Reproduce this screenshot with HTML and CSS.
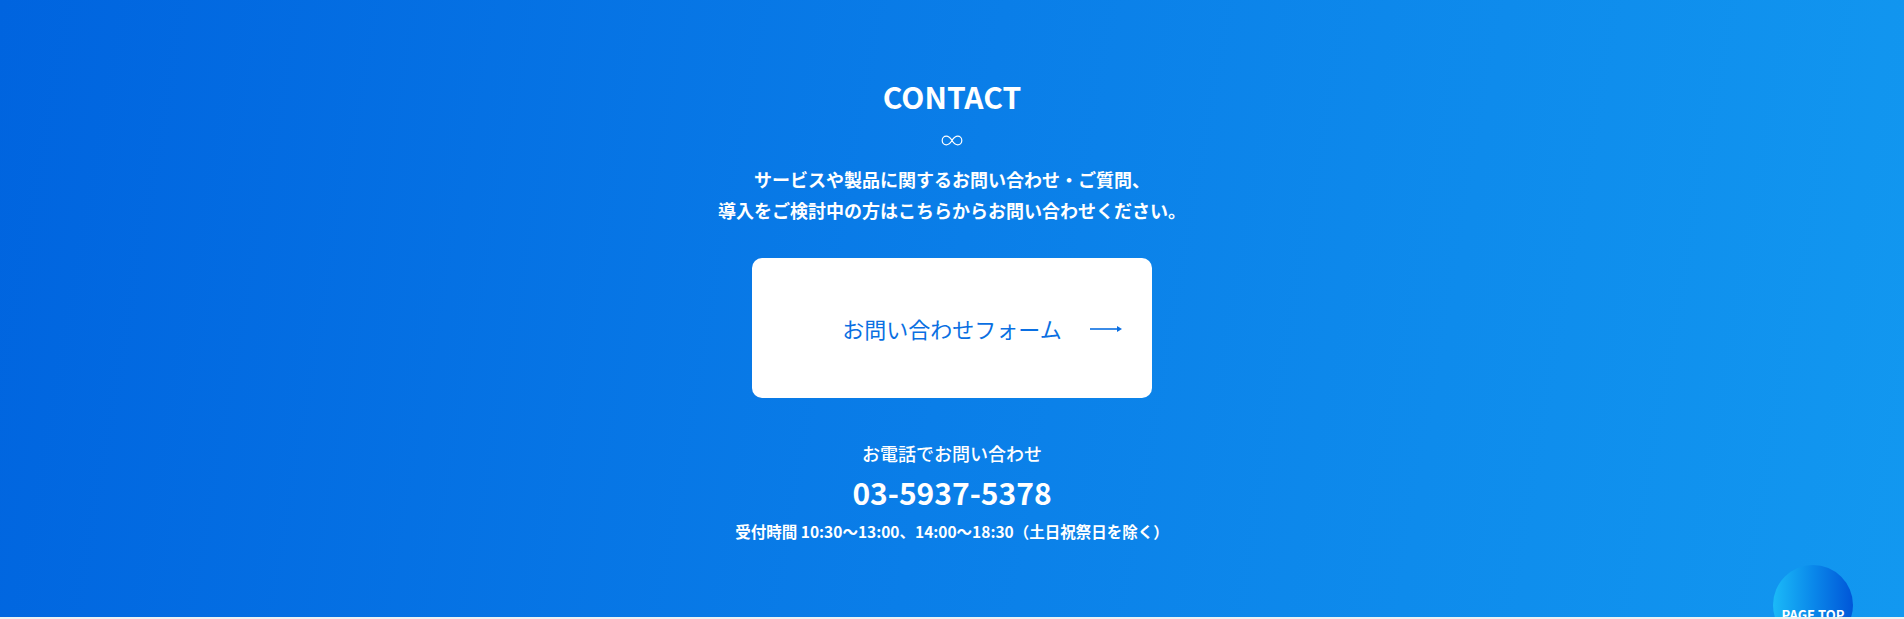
FILE: index.html
```html
<!DOCTYPE html>
<html lang="ja">
<head>
<meta charset="utf-8">
<title>CONTACT</title>
<link rel="stylesheet" href="styles.css">
</head>
<body>
<section class="contact">
  <h2 class="contact-title">CONTACT</h2>
  <div class="contact-mark">
    <svg width="22" height="11" viewBox="0 0 22 11" aria-hidden="true">
      <path d="M11,5.5 C9,2.3 7,1.2 5.3,1.2 C3,1.2 1.2,3.1 1.2,5.5 C1.2,7.9 3,9.8 5.3,9.8 C7,9.8 9,8.7 11,5.5 C13,2.3 15,1.2 16.7,1.2 C19,1.2 20.8,3.1 20.8,5.5 C20.8,7.9 19,9.8 16.7,9.8 C15,9.8 13,8.7 11,5.5 Z" fill="none" stroke="#fff" stroke-width="1.2"/>
    </svg>
  </div>
  <p class="contact-lead">サービスや製品に関するお問い合わせ・ご質問、<br>導入をご検討中の方はこちらからお問い合わせください。</p>
  <a class="form-btn" href="#">
    <span class="form-btn-label">お問い合わせフォーム</span>
    <svg class="form-btn-arrow" width="32" height="8" viewBox="0 0 32 8" aria-hidden="true">
      <path d="M0,4 H28" stroke="#0a6fe2" stroke-width="1.6"/>
      <path d="M27,1 L32,4 L27,7 Z" fill="#0a6fe2"/>
    </svg>
  </a>
  <p class="tel-label">お電話でお問い合わせ</p>
  <p class="tel-number">03-5937-5378</p>
  <p class="tel-hours">受付時間 10:30〜13:00、14:00〜18:30（土日祝祭日を除く）</p>
  <a class="page-top" href="#"><span>PAGE TOP</span></a>
</section>
<div class="next-strip"></div>
</body>
</html>
```

FILE: styles.css
```css
html, body {
  margin: 0;
  padding: 0;
}
body {
  font-family: "Noto Sans CJK JP", "Noto Sans", sans-serif;
  background: #f1f4f4;
}
.contact {
  position: relative;
  overflow: hidden;
  box-sizing: border-box;
  height: 617px;
  padding-top: 74px;
  text-align: center;
  color: #fff;
  background: linear-gradient(100deg, #0064df 0%, #0a7ee8 50%, #1298f0 100%);
}
.contact-title {
  margin: 0;
  font-size: 30px;
  font-weight: 700;
  line-height: 44px;
  letter-spacing: 0;
}
.contact-mark {
  margin-top: 17px;
  height: 11px;
  line-height: 0;
}
.contact-lead {
  margin: 18px 0 0;
  font-size: 18px;
  font-weight: 700;
  line-height: 31px;
}
.form-btn {
  position: relative;
  display: flex;
  align-items: center;
  justify-content: center;
  width: 400px;
  height: 140px;
  margin: 32px auto 0;
  background: #fff;
  border-radius: 10px;
  text-decoration: none;
  color: #0a6fe2;
}
.form-btn-label {
  font-size: 22px;
  font-weight: 400;
  line-height: 30px;
  margin-bottom: 1px;
}
.form-btn-arrow {
  position: absolute;
  right: 30px;
  top: 67px;
}
.tel-label {
  margin: 41px 0 0;
  font-size: 18px;
  font-weight: 500;
  line-height: 28px;
}
.tel-number {
  margin: 5px 0 0;
  font-size: 30px;
  font-weight: 700;
  line-height: 40px;
}
.tel-hours {
  margin: 7px 0 0;
  font-size: 15.5px;
  font-weight: 700;
  line-height: 24px;
}
.page-top {
  position: absolute;
  left: 1773px;
  top: 565px;
  width: 80px;
  height: 80px;
  border-radius: 50%;
  background: linear-gradient(90deg, #1bbaf8 0%, #0a88ea 50%, #0056d8 100%);
  color: #fff;
  text-decoration: none;
  font-size: 13px;
  font-weight: 700;
  line-height: 16px;
  box-sizing: border-box;
  padding-top: 42px;
  text-align: center;
}
.next-strip {
  height: 2px;
  background: #eef2f3;
}
```
